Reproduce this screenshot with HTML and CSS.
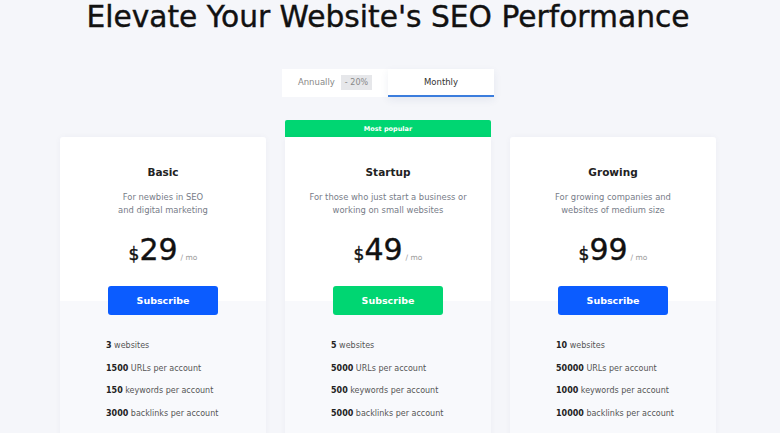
FILE: index.html
```html
<!DOCTYPE html>
<html lang="en">
<head>
<meta charset="utf-8">
<title>Pricing</title>
<link rel="stylesheet" href="styles.css">
</head>
<body>
<div class="page">
  <h1 class="title">Elevate Your Website's SEO Performance</h1>
  <div class="toggle">
    <button class="tab">Annually <span class="badge">- 20%</span></button>
    <button class="tab active">Monthly</button>
  </div>
  <div class="plans">
    <div class="plan">
      <div class="card">
        <h2 class="name">Basic</h2>
        <p class="desc">For newbies in SEO<br>and digital marketing</p>
        <div class="price"><span class="cur">$</span><span class="amt">29</span><span class="per">/ mo</span></div>
        <button class="btn blue">Subscribe</button>
        <ul class="features">
          <li><b>3</b> websites</li>
          <li><b>1500</b> URLs per account</li>
          <li><b>150</b> keywords per account</li>
          <li><b>3000</b> backlinks per account</li>
        </ul>
      </div>
    </div>
    <div class="plan">
      <div class="ribbon">Most popular</div>
      <div class="card">
        <h2 class="name">Startup</h2>
        <p class="desc">For those who just start a business or<br>working on small websites</p>
        <div class="price"><span class="cur">$</span><span class="amt">49</span><span class="per">/ mo</span></div>
        <button class="btn green">Subscribe</button>
        <ul class="features">
          <li><b>5</b> websites</li>
          <li><b>5000</b> URLs per account</li>
          <li><b>500</b> keywords per account</li>
          <li><b>5000</b> backlinks per account</li>
        </ul>
      </div>
    </div>
    <div class="plan">
      <div class="card">
        <h2 class="name">Growing</h2>
        <p class="desc">For growing companies and<br>websites of medium size</p>
        <div class="price"><span class="cur">$</span><span class="amt">99</span><span class="per">/ mo</span></div>
        <button class="btn blue">Subscribe</button>
        <ul class="features">
          <li><b>10</b> websites</li>
          <li><b>50000</b> URLs per account</li>
          <li><b>1000</b> keywords per account</li>
          <li><b>10000</b> backlinks per account</li>
        </ul>
      </div>
    </div>
  </div>
</div>
</body>
</html>
```
FILE: styles.css
```css
* { box-sizing: border-box; }
html, body { margin: 0; padding: 0; }
body {
  background: #f5f6fa;
  font-family: "DejaVu Sans", "Noto Sans", sans-serif;
  color: #1a1a1a;
  overflow: hidden;
  height: 433px;
}
.page {
  width: 776px;
  display: flex;
  flex-direction: column;
  align-items: center;
}
.title {
  margin: 0;
  font-size: 29.7px;
  font-weight: 500;
  line-height: 34px;
  color: #111;
  -webkit-text-stroke: 0.4px #111;
}
.toggle {
  margin-top: 35px;
  display: flex;
  width: 212px;
  height: 28px;
}
.tab {
  flex: 1;
  border: 0;
  background: #fff;
  font-family: inherit;
  font-size: 8.5px;
  color: #888;
  padding: 0;
  display: flex;
  align-items: center;
  justify-content: center;
  gap: 6px;
  border-bottom: 2px solid transparent;
}
.tab.active {
  color: #333;
  border-bottom-color: #3b7ddd;
  box-shadow: 0 3px 8px rgba(40, 60, 110, 0.08);
}
.badge {
  background: #e6e7ea;
  color: #888;
  padding: 3px 4px;
  font-size: 8px;
}
.plans {
  margin-top: 23px;
  display: grid;
  grid-template-columns: repeat(3, 206px);
  column-gap: 19px;
  align-items: end;
}
.plan {
  display: flex;
  flex-direction: column;
}
.ribbon {
  height: 17px;
  background: #00d672;
  color: #fff;
  font-size: 6.5px;
  font-weight: 600;
  display: flex;
  align-items: center;
  justify-content: center;
  border-radius: 2px 2px 0 0;
}
.card {
  height: 320px;
  background: linear-gradient(#fff 0, #fff 164px, #f8f9fc 164px);
  display: flex;
  flex-direction: column;
  align-items: center;
  box-shadow: 0 0 6px rgba(40, 60, 110, 0.04);
  border-radius: 3px 3px 0 0;
}
.plan:nth-child(2) .card { border-radius: 0; }
.name {
  margin: 28px 0 0;
  font-size: 10.5px;
  font-weight: 600;
  line-height: 14px;
  color: #222;
}
.desc {
  margin: 12px 0 0;
  font-size: 8.4px;
  line-height: 13px;
  color: #777c88;
  text-align: center;
}
.price {
  margin-top: 16px;
  display: flex;
  align-items: baseline;
  height: 34px;
}
.cur {
  font-size: 17px;
  font-weight: 500;
  color: #111;
  -webkit-text-stroke: 0.4px #111;
}
.amt {
  font-size: 30px;
  font-weight: 500;
  color: #111;
  line-height: 34px;
  -webkit-text-stroke: 0.4px #111;
}
.per {
  font-size: 7.5px;
  color: #999;
  margin-left: 3px;
}
.btn {
  margin-top: 19px;
  width: 110px;
  height: 29px;
  border: 0;
  border-radius: 3px;
  color: #fff;
  font-family: inherit;
  font-size: 9.5px;
  font-weight: 700;
  padding: 0;
}
.btn.blue { background: #0b5cff; }
.btn.green { background: #00d672; }
.features {
  list-style: none;
  margin: 25px 0 0;
  padding: 0 0 0 46px;
  align-self: stretch;
  font-size: 8px;
  color: #555;
}
.features li {
  line-height: 12px;
  margin-bottom: 10.7px;
}
.features b { color: #222; font-weight: 700; }
```
